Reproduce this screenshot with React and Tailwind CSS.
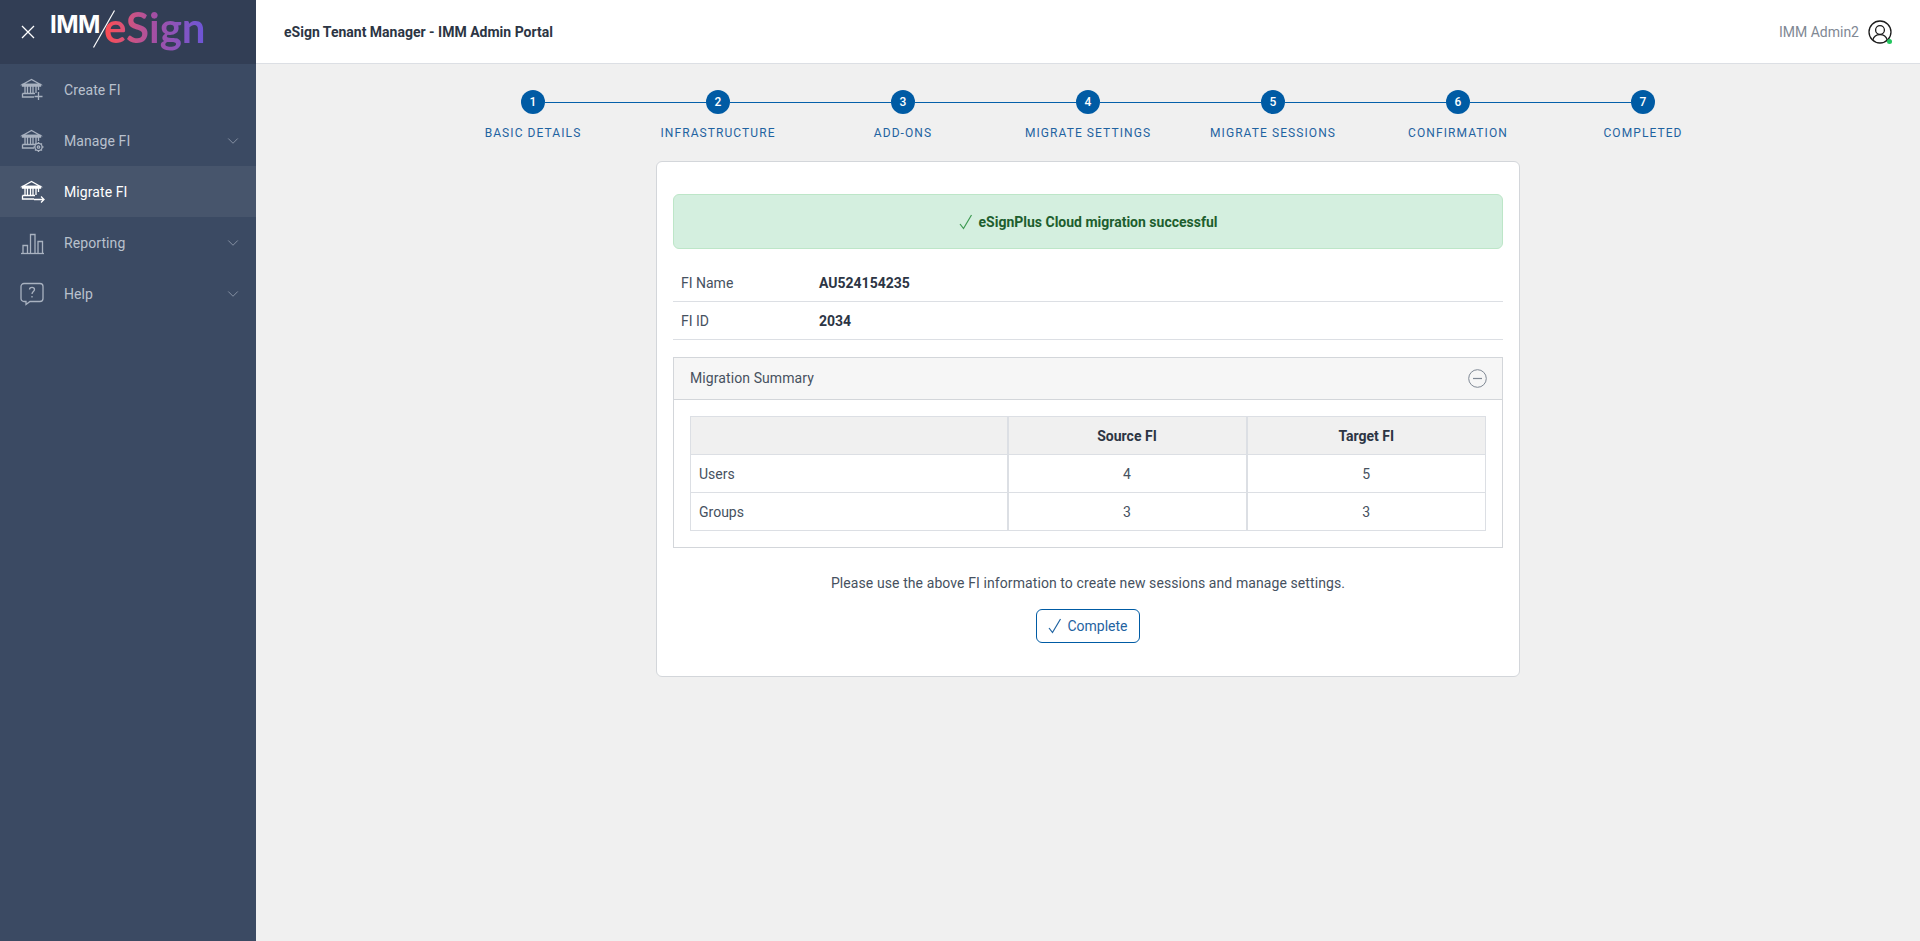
import { ChevronDown } from "lucide-react";

const steps = [
  "Basic Details",
  "Infrastructure",
  "Add-ons",
  "Migrate Settings",
  "Migrate Sessions",
  "Confirmation",
  "Completed",
];

function Bank({ children }) {
  return (
    <svg width="26" height="26" viewBox="0 0 26 26" fill="none" stroke="currentColor" strokeWidth="1.3">
      <path d="M2.5 7.5 L11.5 2.5 L20.5 7.5 Z" />
      <path d="M2.5 7.5 H20.5 V9 H2.5 Z" />
      <path d="M5 9 V16 M7.5 9 V16 M10.5 9 V16 M13 9 V16 M16 9 V16 M18.5 9 V13" />
      <path d="M2.5 16.5 H15 M2.5 16.5 V20 H14" />
      {children}
    </svg>
  );
}

const icons = {
  create: (
    <Bank>
      <path d="M18.5 15 V23 M14.5 19.5 H22.5" strokeWidth="1.3" />
    </Bank>
  ),
  manage: (
    <Bank>
      <circle cx="18.5" cy="19" r="3.6" />
      <circle cx="18.5" cy="19" r="1.2" />
      <path d="M18.5 14 V15.4 M18.5 22.6 V24 M13.5 19 H14.9 M22.1 19 H23.5 M15 15.5 L16 16.5 M21 21.5 L22 22.5 M15 22.5 L16 21.5 M21 16.5 L22 15.5" />
    </Bank>
  ),
  migrate: (
    <Bank>
      <path d="M14 20.5 H24 M21 17.5 L24 20.5 L21 23.5" strokeWidth="1.3" />
    </Bank>
  ),
  reporting: (
    <svg width="26" height="26" viewBox="0 0 26 26" fill="none" stroke="currentColor" strokeWidth="1.3">
      <path d="M1 23.5 H24" />
      <path d="M3 23.5 V15.5 H7.5 V23.5 M10.5 23.5 V4.5 H15 V23.5 M18 23.5 V11.5 H22.5 V23.5" />
    </svg>
  ),
  help: (
    <svg width="26" height="26" viewBox="0 0 26 26" fill="none" stroke="currentColor" strokeWidth="1.3">
      <path d="M4 2.5 H20 A3 3 0 0 1 23 5.5 V17.5 A3 3 0 0 1 20 20.5 H10 L6 23.5 V20.5 H4 A3 3 0 0 1 1 17.5 V5.5 A3 3 0 0 1 4 2.5 Z" />
      <path d="M9.5 8.5 C9.5 5.6 14.5 5.6 14.5 8.5 C14.5 10.5 12 10.5 12 13" />
      <path d="M12 15 V16.5" />
    </svg>
  ),
};

const menu = [
  { label: "Create FI", icon: "create" },
  { label: "Manage FI", icon: "manage", caret: true },
  { label: "Migrate FI", icon: "migrate", active: true },
  { label: "Reporting", icon: "reporting", caret: true },
  { label: "Help", icon: "help", caret: true },
];

function Check({ className }) {
  return (
    <svg className={className} width="14" height="16" viewBox="0 0 14 16" fill="none" stroke="currentColor" strokeWidth="1.2">
      <path d="M1 10 L4.5 14.5 L12.5 1" />
    </svg>
  );
}

function Sidebar() {
  return (
    <aside className="w-64 shrink-0 bg-[#3b4a63] flex flex-col">
      <div className="h-16 bg-[#323e55] flex items-center pl-[21px]">
        <svg width="14" height="14" viewBox="0 0 14 14" fill="none" stroke="#ffffff" strokeWidth="1.3">
          <path d="M1 1 L13 13 M13 1 L1 13" />
        </svg>
        <div className="flex items-center ml-[15px] h-16 font-['Lato',sans-serif] leading-none">
          <span className="text-white text-[24px] font-bold font-['Inter',sans-serif] tracking-[-0.5px] mb-[14px] w-[43px]">IMM</span>
          <svg width="22" height="38" viewBox="0 0 22 38" fill="none" stroke="#ffffff" strokeWidth="1.2" className="mb-[6px]">
            <path d="M21.5 0.5 L0.5 37.5" />
          </svg>
          <span className="text-[42px] font-bold ml-[-11px] mb-[2px] pb-[8px] bg-gradient-to-r from-[#ff4a4d] via-[#a24fa5] to-[#6a55d8] bg-clip-text text-transparent">
            eSign
          </span>
        </div>
      </div>
      <nav>
        {menu.map((item) => (
          <div
            key={item.label}
            className={`h-[51px] flex items-center pl-5 pr-[14px] text-sm tracking-[0.09px] ${
              item.active ? "bg-[#47556c] text-white" : "text-[#b9c1cd]"
            }`}
          >
            <span className={item.active ? "text-white" : "text-[#a9b2c0]"}>{icons[item.icon]}</span>
            <span className="ml-[18px] flex-1">{item.label}</span>
            {item.caret && <ChevronDown size={18} strokeWidth={0.9} className="text-[#a9b2c0]" />}
          </div>
        ))}
      </nav>
    </aside>
  );
}

function Topbar() {
  return (
    <header className="h-16 bg-white border-b border-[#dcdfe4] flex items-center justify-between pl-7 pr-[28px]">
      <h1 className="text-sm font-bold text-[#2c3544]">eSign Tenant Manager - IMM Admin Portal</h1>
      <div className="flex items-center gap-[9px]">
        <span className="text-sm text-[#7f8894]">IMM Admin2</span>
        <div className="relative w-6 h-6">
          <svg width="24" height="24" viewBox="0 0 24 24" fill="none" stroke="#1c1c1c" strokeWidth="1.3">
            <circle cx="12" cy="12" r="11" />
            <circle cx="12" cy="10" r="4.4" />
            <path d="M4.8 20 C6 15.5 9 14.6 12 14.6 C15 14.6 18 15.5 19.2 20" />
          </svg>
          <span className="absolute right-0 bottom-0 w-[5px] h-[5px] rounded-full bg-[#22c55e]" />
        </div>
      </div>
    </header>
  );
}

function Stepper() {
  return (
    <div className="flex justify-center pt-[26px]">
      {steps.map((label, i) => (
        <div key={label} className="w-[185px] flex flex-col items-center">
          <div className="flex items-center w-full">
            <div className={`flex-1 h-px ${i > 0 ? "bg-[#0560aa]" : ""}`} />
            <div className="w-6 h-6 rounded-full bg-[#005ba4] text-white text-xs font-medium flex items-center justify-center">
              {i + 1}
            </div>
            <div className={`flex-1 h-px ${i < steps.length - 1 ? "bg-[#0560aa]" : ""}`} />
          </div>
          <div className="mt-[10px] mb-[2px] text-xs leading-[18px] uppercase tracking-[1.08px] text-[#1f63a1] whitespace-nowrap">
            {label}
          </div>
        </div>
      ))}
    </div>
  );
}

function InfoRow({ label, value }) {
  return (
    <div className="h-[38px] flex items-center border-b border-[#dcdfe4] pl-2 pt-px text-sm">
      <span className="w-[138px] text-[#465160]">{label}</span>
      <span className="font-bold text-[#2c3544]">{value}</span>
    </div>
  );
}

function Summary() {
  const th = "h-[38px] border border-[#dcdfe4] bg-[#f0f0f0] font-bold text-[#2c3544] text-center";
  const td = "h-[38px] border border-[#dcdfe4] text-center text-[#465160]";
  return (
    <div className="mt-[17px] border border-[#d3d6da]">
      <div className="h-[42px] bg-[#f6f6f6] border-b border-[#d3d6da] flex items-center justify-between pl-4 pr-[15px]">
        <span className="text-sm tracking-[0.09px] text-[#465160] mb-[2px]">Migration Summary</span>
        <svg width="19" height="19" viewBox="0 0 19 19" fill="none" stroke="#7f8894" strokeWidth="1">
          <circle cx="9.5" cy="9.5" r="8.8" />
          <path d="M5 9.5 H14" strokeWidth="1.2" />
        </svg>
      </div>
      <div className="p-4">
        <table className="w-full border-collapse table-fixed text-sm">
          <thead>
            <tr>
              <th className={`${th} w-[317px]`}></th>
              <th className={`${th} border-r-2 border-l-2 w-[239px]`}>Source FI</th>
              <th className={th}>Target FI</th>
            </tr>
          </thead>
          <tbody>
            <tr>
              <td className={`${td} text-left pl-2`}>Users</td>
              <td className={`${td} border-r-2 border-l-2`}>4</td>
              <td className={td}>5</td>
            </tr>
            <tr>
              <td className={`${td} text-left pl-2`}>Groups</td>
              <td className={`${td} border-r-2 border-l-2`}>3</td>
              <td className={td}>3</td>
            </tr>
          </tbody>
        </table>
      </div>
    </div>
  );
}

export default function App() {
  return (
    <div className="min-h-[941px] h-[941px] flex bg-[#f0f0f0] font-['Roboto',sans-serif]">
      <Sidebar />
      <main className="flex-1 flex flex-col">
        <Topbar />
        <Stepper />
        <div className="w-[864px] mx-auto mt-[17px] h-[516px] bg-white border border-[#d3d6da] rounded-md pt-8 px-4">
          <div className="h-[55px] bg-[#d4efdf] border border-[#bde6c8] rounded-md flex items-center justify-center gap-[6px] text-sm font-bold text-[#1d5e2e]">
            <Check className="text-[#3e9a52]" />
            eSignPlus Cloud migration successful
          </div>
          <div className="mt-[15px]">
            <InfoRow label="FI Name" value="AU524154235" />
            <InfoRow label="FI ID" value="2034" />
          </div>
          <Summary />
          <p className="mt-[25px] text-sm tracking-[0.09px] text-center text-[#465160]">
            Please use the above FI information to create new sessions and manage settings.
          </p>
          <div className="flex justify-center mt-[16px]">
            <button className="w-[104px] h-[34px] border border-[#005ba4] rounded-md bg-white text-sm text-[#1f63a1] flex items-center justify-center gap-[5px]">
              <Check />
              Complete
            </button>
          </div>
        </div>
      </main>
    </div>
  );
}
